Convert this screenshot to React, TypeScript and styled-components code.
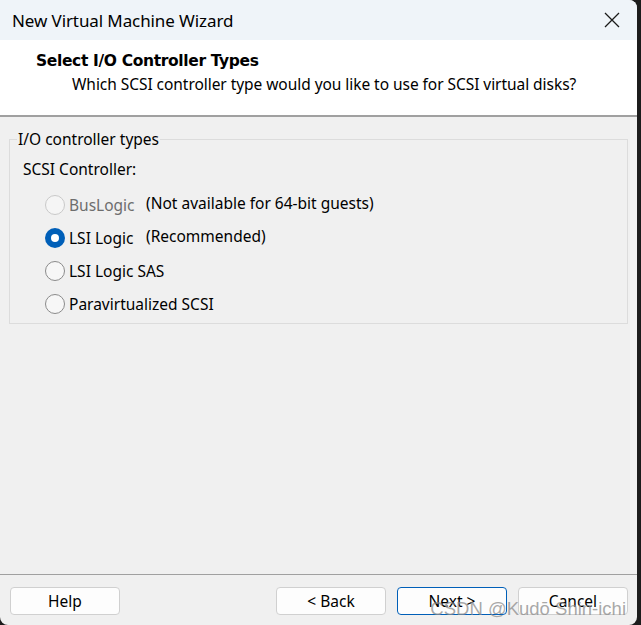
import React, { useState } from 'react';
import styled, { createGlobalStyle } from 'styled-components';

const GlobalStyle = createGlobalStyle`
  html, body {
    margin: 0;
    padding: 0;
    background: #1c1c1c;
  }
  body {
    font-family: "Noto Sans", "Open Sans", sans-serif;
    color: #000;
  }
`;

const Window = styled.div`
  position: relative;
  width: 637px;
  height: 625px;
  background: #f0f0f0;
  border-radius: 0 8px 8px 8px;
  overflow: hidden;
  display: flex;
  flex-direction: column;
`;

const TitleBar = styled.div`
  height: 40px;
  flex: none;
  display: flex;
  align-items: center;
  justify-content: space-between;
  padding: 0 0 0 12px;
  background: #eff4f9;
  font-size: 17px;
  letter-spacing: -0.1px;
`;

const CloseButton = styled.button`
  width: 46px;
  height: 40px;
  border: none;
  background: transparent;
  display: flex;
  align-items: center;
  justify-content: center;
  padding: 0;
  margin-right: 2px;
`;

const Header = styled.div`
  flex: none;
  background: #fff;
  border-bottom: 2px solid #a0a0a0;
  padding: 11px 0 0 36px;
  box-sizing: border-box;
  height: 77px;
`;

const HeaderTitle = styled.div`
  font-family: "DejaVu Sans", sans-serif;
  font-weight: bold;
  font-size: 15.5px;
  letter-spacing: -0.35px;
  line-height: 21px;
`;

const HeaderSub = styled.div`
  font-size: 15.5px;
  line-height: 21px;
  margin-top: 2px;
  padding-left: 36px;
  letter-spacing: -0.05px;
`;

const Body = styled.div`
  flex: 1;
  padding: 12px 10px 0 9px;
`;

const GroupBox = styled.fieldset`
  margin: 0;
  border: 1px solid #dcdcdc;
  padding: 0;
  height: 195px;
  box-sizing: border-box;
  width: 619px;
`;

const Legend = styled.legend`
  padding: 0 1px;
  margin-left: 7px;
  font-size: 15.5px;
  line-height: 20px;
`;

const GroupContent = styled.div`
  padding: 0 0 0 13px;
`;

const SectionLabel = styled.div`
  font-size: 15.5px;
  line-height: 20px;
  margin-top: 10px;
  margin-bottom: 16px;
`;

const OptionList = styled.div`
  display: flex;
  flex-direction: column;
  gap: 13px;
  padding-left: 22px;
`;

const OptionRow = styled.label`
  display: flex;
  align-items: center;
  height: 20px;
  font-size: 15.5px;
`;

const Radio = styled.span<{ $checked: boolean; $disabled: boolean }>`
  width: 20px;
  height: 20px;
  box-sizing: border-box;
  border-radius: 50%;
  flex: none;
  display: flex;
  align-items: center;
  justify-content: center;
  border: ${({ $checked, $disabled }) =>
    $checked ? 'none' : `1px solid ${$disabled ? '#c9c9c9' : '#8b8b8b'}`};
  background: ${({ $checked, $disabled }) =>
    $checked ? '#005fb8' : $disabled ? '#f5f5f5' : '#f7f7f7'};

  &::after {
    content: '';
    display: ${({ $checked }) => ($checked ? 'block' : 'none')};
    width: 8px;
    height: 8px;
    border-radius: 50%;
    background: #fff;
  }
`;

const OptionName = styled.span<{ $disabled: boolean; $width?: number }>`
  margin-left: 4px;
  width: ${({ $width }) => ($width ? `${$width}px` : 'auto')};
  color: ${({ $disabled }) => ($disabled ? '#6d6d6d' : '#000')};
`;

const OptionNote = styled.span`
  margin-top: -5px;
`;

const Footer = styled.div`
  flex: none;
  height: 51px;
  box-sizing: border-box;
  border-top: 1px solid #a0a0a0;
  display: flex;
  align-items: flex-start;
  padding: 12px 9px 0 10px;
`;

const Spacer = styled.div`
  flex: 1;
`;

const Button = styled.button<{ $primary?: boolean }>`
  width: 110px;
  height: 28px;
  box-sizing: border-box;
  background: #fdfdfd;
  border: 1px solid ${({ $primary }) => ($primary ? '#005fb8' : '#d0d0d0')};
  border-radius: 4px;
  font-family: "Noto Sans", "Open Sans", sans-serif;
  font-size: 15.5px;
  color: #000;
  padding: 0;
  margin-left: 11px;

  &:first-child {
    margin-left: 0;
  }
`;

const Watermark = styled.div`
  position: absolute;
  right: 11px;
  bottom: 5px;
  font-family: "Liberation Sans", Arial, sans-serif;
  font-size: 18.5px;
  color: rgba(140, 140, 140, 0.75);
  pointer-events: none;
  white-space: nowrap;
`;

const options = [
  { id: 'buslogic', name: 'BusLogic', note: '(Not available for 64-bit guests)', disabled: true },
  { id: 'lsi', name: 'LSI Logic', note: '(Recommended)', disabled: false },
  { id: 'sas', name: 'LSI Logic SAS', note: '', disabled: false },
  { id: 'pvscsi', name: 'Paravirtualized SCSI', note: '', disabled: false },
];

const App: React.FC = () => {
  const [selected, setSelected] = useState('lsi');

  return (
    <>
      <GlobalStyle />
      <Window>
        <TitleBar>
          <span>New Virtual Machine Wizard</span>
          <CloseButton aria-label="Close">
            <svg width="16" height="16" viewBox="0 0 16 16">
              <path d="M1 1 L15 15 M15 1 L1 15" stroke="#1a1a1a" strokeWidth="1.3" />
            </svg>
          </CloseButton>
        </TitleBar>

        <Header>
          <HeaderTitle>Select I/O Controller Types</HeaderTitle>
          <HeaderSub>Which SCSI controller type would you like to use for SCSI virtual disks?</HeaderSub>
        </Header>

        <Body>
          <GroupBox>
            <Legend>I/O controller types</Legend>
            <GroupContent>
              <SectionLabel>SCSI Controller:</SectionLabel>
              <OptionList>
                {options.map((opt) => (
                  <OptionRow
                    key={opt.id}
                    onClick={() => !opt.disabled && setSelected(opt.id)}
                  >
                    <Radio $checked={selected === opt.id} $disabled={opt.disabled} />
                    <OptionName $disabled={opt.disabled} $width={opt.note ? 77 : undefined}>
                      {opt.name}
                    </OptionName>
                    {opt.note && <OptionNote>{opt.note}</OptionNote>}
                  </OptionRow>
                ))}
              </OptionList>
            </GroupContent>
          </GroupBox>
        </Body>

        <Footer>
          <Button>Help</Button>
          <Spacer />
          <Button>&lt; Back</Button>
          <Button $primary>Next &gt;</Button>
          <Button>Cancel</Button>
        </Footer>

        <Watermark>CSDN @Kudō Shin-ichi</Watermark>
      </Window>
    </>
  );
};

export default App;
